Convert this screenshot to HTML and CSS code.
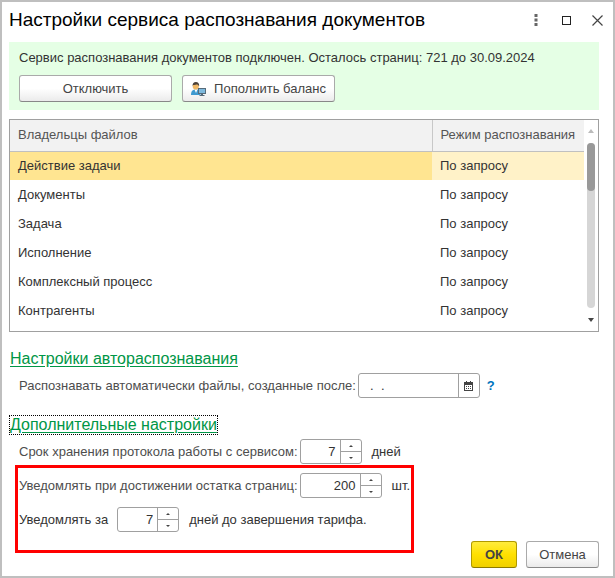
FILE: index.html
```html
<!DOCTYPE html>
<html lang="ru">
<head>
    <meta charset="UTF-8">
    <meta name="viewport" content="width=device-width, initial-scale=1.0">
    <title>Настройки сервиса распознавания документов</title>
    <link rel="stylesheet" href="styles.css">
</head>
<body>
    <form class="window">
        <!-- Title bar -->
        <header class="titlebar">
            <h1>Настройки сервиса распознавания документов</h1>
            <div class="window-buttons">
                <button type="button" class="icon-button" aria-label="Ещё">
                    <svg width="4" height="12" viewBox="0 0 4 12"><path d="M.5 0h3v3h-3zM.5 4.500h3v3h-3zM.5 9h3v3h-3z" fill="#666"/></svg>
                </button>
                <button type="button" class="icon-button" aria-label="Развернуть">
                    <svg width="9" height="9" viewBox="0 0 9 9"><rect x=".5" y=".5" width="8" height="8" fill="none" stroke="#222"/></svg>
                </button>
                <button type="button" class="icon-button" aria-label="Закрыть">
                    <svg width="11" height="11" viewBox="0 0 11 11"><path d="M.5.5l10 10M10.500.5l-10 10" stroke="#444" stroke-width="1.200"/></svg>
                </button>
            </div>
        </header>

        <!-- Service status -->
        <section class="status">
            <p>Сервис распознавания документов подключен. Осталось страниц: 721 до 30.09.2024</p>
            <div class="status-buttons">
                <button type="button" class="button">Отключить</button>
                <button type="button" class="button">
                    <svg width="15" height="14" viewBox="0 0 15 14">
                        <path d="M0 13c0-4 1.500-5.500 5-5.500S9.500 9 9.500 13z" fill="#3f9ad0"/>
                        <path d="M3.500 7.500L5 11l1.500-3.500z" fill="#fff"/>
                        <circle cx="4.800" cy="4.500" r="3.100" fill="#f0b866"/>
                        <path d="M1.500 4C1.500 1.200 2.800 0 4.900 0s3.400 1.400 3.300 4C7 3.500 6.500 2.500 6 2.200 5 3 3.500 2.800 2.300 3z" fill="#4a4038"/>
                        <rect x="7.500" y="6.500" width="7" height="5" fill="#7db9dd" stroke="#566b7a"/>
                        <path d="M10 12h2v1h1.500v1h-5v-1H10z" fill="#566b7a"/>
                    </svg>
                    <span>Пополнить баланс</span>
                </button>
            </div>
        </section>

        <!-- File owners -->
        <div class="owners">
            <table>
                <thead>
                    <tr><th>Владельцы файлов</th><th class="mode">Режим распознавания</th></tr>
                </thead>
                <tbody>
                    <tr class="selected"><td>Действие задачи</td><td>По запросу</td></tr>
                    <tr><td>Документы</td><td>По запросу</td></tr>
                    <tr><td>Задача</td><td>По запросу</td></tr>
                    <tr><td>Исполнение</td><td>По запросу</td></tr>
                    <tr><td>Комплексный процесс</td><td>По запросу</td></tr>
                    <tr><td>Контрагенты</td><td>По запросу</td></tr>
                </tbody>
            </table>
            <div class="scrollbar">
                <span class="arrow arrow-up"></span>
                <div class="track"><div class="thumb"></div></div>
                <span class="arrow arrow-down"></span>
            </div>
        </div>

        <!-- Auto recognition -->
        <section class="group">
            <a class="group-title" href="#auto">Настройки автораспознавания</a>
            <div class="row">
                <label for="created-after">Распознавать автоматически файлы, созданные после:</label>
                <div class="field date">
                    <input type="text" id="created-after" value="  .  .">
                    <button type="button" aria-label="Выбрать дату">
                        <svg width="9" height="10" viewBox="0 0 9 10">
                            <path d="M0 1h9v9H0z" fill="#444"/>
                            <path d="M1 4h7v5H1z" fill="#fff"/>
                            <path d="M2 0h1v2H2zM6 0h1v2H6z" fill="#444"/>
                            <path d="M2 5h1v1H2zM4 5h1v1H4zM6 5h1v1H6zM2 7h1v1H2zM4 7h1v1H4zM6 7h1v1H6z" fill="#444"/>
                        </svg>
                    </button>
                </div>
                <a class="help" href="#help">?</a>
            </div>
        </section>

        <!-- Additional settings -->
        <section class="group">
            <a class="group-title focused" href="#more">Дополнительные настройки</a>
            <div class="row">
                <label for="log-days">Срок хранения протокола работы с сервисом:</label>
                <div class="field">
                    <input type="text" inputmode="numeric" id="log-days" value="7">
                    <div class="spin">
                        <button type="button" aria-label="Больше"></button>
                        <button type="button" aria-label="Меньше"></button>
                    </div>
                </div>
                <span class="unit">дней</span>
            </div>
            <div class="notify">
                <div class="row">
                    <label for="pages-left">Уведомлять при достижении остатка страниц:</label>
                    <div class="field wide">
                        <input type="text" inputmode="numeric" id="pages-left" value="200">
                        <div class="spin">
                            <button type="button" aria-label="Больше"></button>
                            <button type="button" aria-label="Меньше"></button>
                        </div>
                    </div>
                    <span class="unit">шт.</span>
                </div>
                <div class="row">
                    <label class="lead" for="days-left">Уведомлять за</label>
                    <div class="field">
                        <input type="text" inputmode="numeric" id="days-left" value="7">
                        <div class="spin">
                            <button type="button" aria-label="Больше"></button>
                            <button type="button" aria-label="Меньше"></button>
                        </div>
                    </div>
                    <span class="unit">дней до завершения тарифа.</span>
                </div>
            </div>
        </section>

        <footer class="actions">
            <button type="submit" class="button primary">ОК</button>
            <button type="button" class="button">Отмена</button>
        </footer>
    </form>
</body>
</html>
```
FILE: styles.css
```css
* {
    margin: 0;
    padding: 0;
    box-sizing: border-box;
}
body {
    font-family: "Liberation Sans", Arial, sans-serif;
    font-size: 13px;
    line-height: 16px;
    color: #333;
    background: #fff;
}
button,
input {
    font: inherit;
    color: inherit;
}
svg {
    display: block;
}
.window {
    display: flex;
    flex-direction: column;
    min-height: 100vh;
    padding: 0 14px 8px 7px;
    border: 2px solid #bfbfbf;
}

/* Title bar */
.titlebar {
    display: flex;
    justify-content: space-between;
    align-items: center;
    height: 40px;
    margin-right: -14px;
    padding-bottom: 4px;
}
.titlebar h1 {
    font-size: 19px;
    line-height: 20px;
    font-weight: normal;
    color: #000;
}
.window-buttons {
    display: flex;
}
.icon-button {
    display: flex;
    justify-content: center;
    align-items: center;
    width: 31px;
    height: 30px;
    border: none;
    background: none;
}

/* Buttons */
.button {
    display: flex;
    justify-content: center;
    align-items: center;
    gap: 8px;
    height: 27px;
    border: 1px solid #aaa;
    border-bottom-color: #888;
    border-radius: 3px;
    background: linear-gradient(#fff 50%, #ebebeb);
    color: #444;
}
.primary {
    border-color: #b09a00;
    border-bottom-color: #8c7a00;
    background: linear-gradient(#ffec3d, #ffe000 50%, #f0d000);
    font-weight: bold;
}

/* Service status */
.status {
    padding: 8px 10px;
    background: #e5ffe5;
}
.status-buttons {
    display: flex;
    gap: 10px;
    margin-top: 9px;
}
.status-buttons .button {
    width: 153px;
}

/* File owners */
.owners {
    display: flex;
    margin-top: 9px;
    padding-bottom: 6px;
    border: 1px solid #a0a0a0;
}
.owners table {
    flex: 1;
    border-collapse: collapse;
}
.owners th,
.owners td {
    height: 29px;
    padding: 0 8px;
    text-align: left;
    white-space: nowrap;
}
.owners th {
    height: 31px;
    border-bottom: 1px solid #c0c0c0;
    background: #f2f2f2;
    font-weight: normal;
    color: #555;
}
.owners .mode {
    width: 152px;
    border-left: 1px solid #c8c8c8;
}
.selected td {
    background: #fff2c8;
}
.selected td:first-child {
    background: #ffe591;
}
.scrollbar {
    display: flex;
    flex-direction: column;
    align-items: center;
    width: 14px;
    padding: 9px 0 3px;
}
.arrow {
    border: 3px solid transparent;
}
.arrow-up {
    border-top: none;
    border-bottom: 4px solid #bbb;
}
.arrow-down {
    border-bottom: none;
    border-top: 4px solid #444;
}
.track {
    flex: 1;
    width: 8px;
    margin: 10px 0;
    border-radius: 4px;
    background: #d6d6d6;
}
.thumb {
    height: 48px;
    border-radius: 4px;
    background: #999;
}

/* Setting groups */
.group {
    margin-top: 17px;
}
.group-title {
    display: block;
    width: fit-content;
    border: 1px solid transparent;
    font-size: 16px;
    line-height: 18px;
    color: #009646;
    text-underline-offset: 2px;
}
.focused {
    border: 1px dotted #000;
}
.row {
    display: flex;
    align-items: center;
    margin-left: 10px;
    white-space: nowrap;
}
.group-title + .row {
    margin-top: 4px;
}
.row label {
    margin-right: 2px;
    color: #4d4d4d;
}
.row .lead {
    margin-right: 9px;
    color: #333;
}
.unit {
    margin-left: 10px;
}
.help {
    margin-left: 7px;
    font-weight: bold;
    color: #0074bd;
    text-decoration: none;
}

/* Fields */
.field {
    display: flex;
    width: 62px;
    height: 25px;
    border: 1px solid #a0a0a0;
    border-radius: 3px;
    background: #fff;
}
.field input {
    flex: 1;
    min-width: 0;
    padding-right: 4px;
    border: none;
    outline: none;
    background: none;
    text-align: right;
}
.wide {
    width: 82px;
}
.date {
    width: 122px;
}
.date input {
    padding-left: 4px;
    text-align: left;
}
.date button {
    display: flex;
    justify-content: center;
    align-items: center;
    width: 21px;
    border: none;
    border-left: 1px solid #a0a0a0;
    background: none;
}
.spin {
    display: flex;
    flex-direction: column;
    width: 21px;
    border-left: 1px solid #a0a0a0;
}
.spin button {
    display: flex;
    flex: 1;
    justify-content: center;
    align-items: center;
    border: none;
    background: none;
}
.spin button + button {
    border-top: 1px solid #a0a0a0;
}
.spin button::before {
    content: "";
    border: 2px solid transparent;
    border-top: none;
    border-bottom-color: #444;
}
.spin button + button::before {
    border-top: 2px solid #444;
    border-bottom: none;
}

/* Notification settings, the action buttons rise beside the frame */
.notify {
    width: fit-content;
    margin: 1px 0 -12px 6px;
    padding: 5px 1px 18px;
    border: 3px solid #f00;
}
.notify .row {
    margin-left: 0;
}
.notify .row + .row {
    margin-top: 9px;
}

/* Actions */
.actions {
    display: flex;
    justify-content: flex-end;
    gap: 9px;
    margin-top: auto;
}
.actions .button {
    width: 73px;
}
.actions .primary {
    width: 46px;
}
```
